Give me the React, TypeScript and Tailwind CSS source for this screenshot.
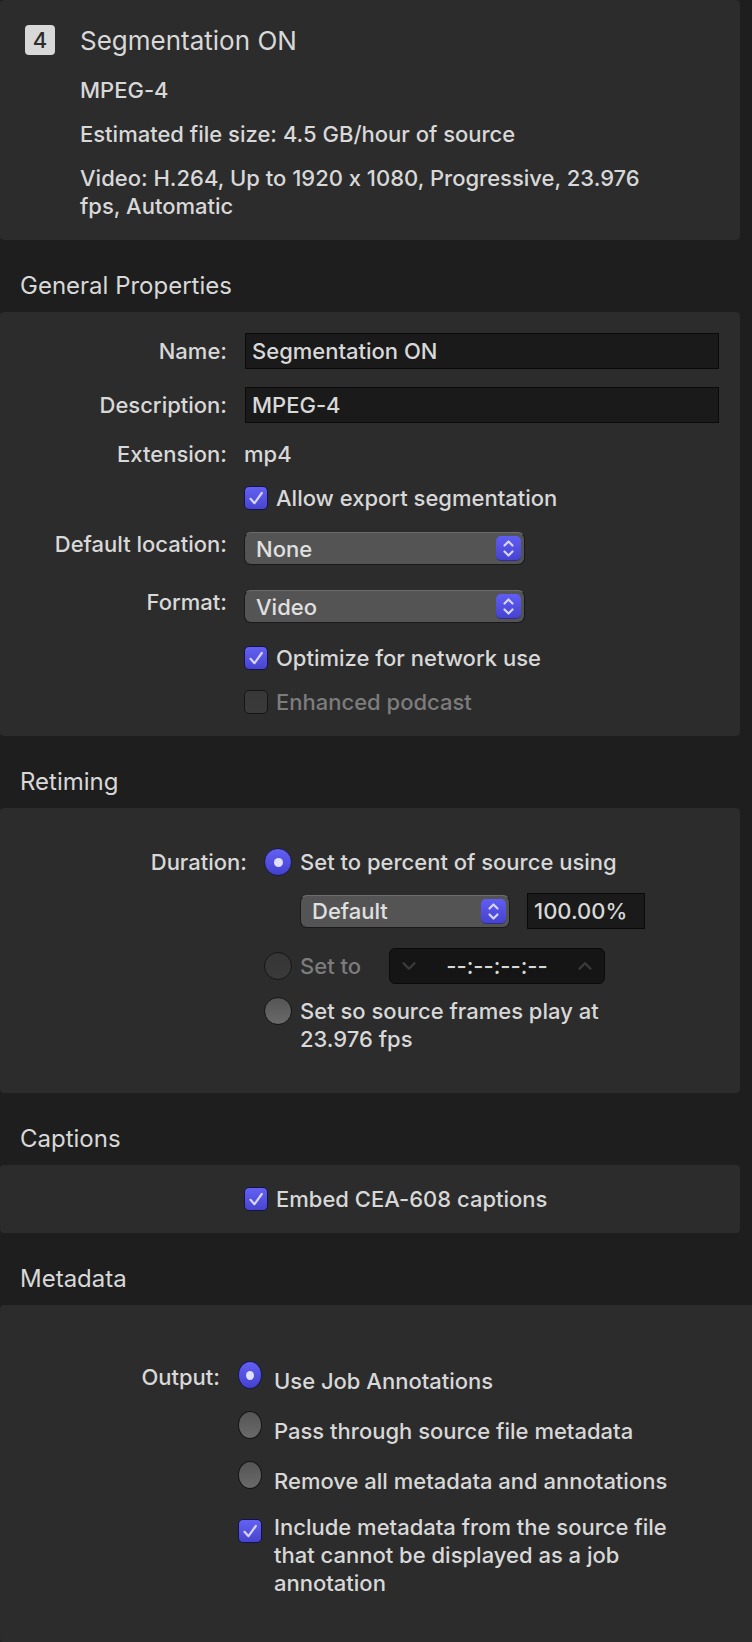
import { useState, type ReactNode } from 'react'
import { ChevronDown, ChevronUp } from 'lucide-react'

type ToggleProps = {
  id: string
  checked: boolean
  onChange: () => void
  disabled?: boolean
}

function Checkbox({ id, checked, onChange, disabled }: ToggleProps) {
  return (
    <span className="relative h-6 w-6 shrink-0">
      <input
        id={id}
        type="checkbox"
        checked={checked}
        onChange={onChange}
        disabled={disabled}
        className="block h-6 w-6 appearance-none rounded-[5px] border border-[#161616] bg-linear-to-b from-[#555555] to-[#666666] checked:border-[#14144a] checked:from-[#6461f2] checked:to-[#4745cf] disabled:from-[#383838] disabled:to-[#3a3a3a]"
      />
      {checked && (
        <svg viewBox="0 0 24 24" className="pointer-events-none absolute inset-0 h-6 w-6" fill="none" stroke="#d6d5fb" strokeWidth="2.2" strokeLinecap="round" strokeLinejoin="round">
          <path d="M6.5 12.8 L10.5 17.2 L17.8 7" />
        </svg>
      )}
    </span>
  )
}

function Radio({ id, name, checked, onChange, disabled, narrow }: ToggleProps & { name: string; narrow?: boolean }) {
  const width = narrow ? 'w-6' : 'w-7'
  return (
    <span className={`relative h-7 shrink-0 ${width}`}>
      <input
        id={id}
        name={name}
        type="radio"
        checked={checked}
        onChange={onChange}
        disabled={disabled}
        className={`block h-7 appearance-none rounded-[50%] border border-[#161616] bg-linear-to-b from-[#555555] to-[#6a6a6a] checked:border-[#1a1a50] checked:from-[#6360f3] checked:to-[#4441d0] disabled:from-[#363636] disabled:to-[#3a3a3a] ${width}`}
      />
      {checked && (
        <span className="pointer-events-none absolute inset-0 flex items-center justify-center">
          <span className={`h-[9px] rounded-[50%] bg-[#e0dffc] ${narrow ? 'w-2' : 'w-[9px]'}`} />
        </span>
      )}
    </span>
  )
}

function PopUp({ id, label, options, className }: { id: string; label?: string; options: string[]; className: string }) {
  return (
    <div className={`relative ${className}`}>
      <select
        id={id}
        aria-label={label}
        className="block h-[33px] w-full appearance-none rounded-[7px] border border-[#1a1a1a] border-t-[#6c6c6c] bg-[#545454] pl-[11px] pr-9 text-[22px] font-medium leading-[30px] text-[#e0e0e0]"
      >
        {options.map((option) => (
          <option key={option}>{option}</option>
        ))}
      </select>
      <span className="pointer-events-none absolute right-1 top-1 h-[25px] w-[25px] rounded-[5px] border-b border-[#2f2e8c] bg-linear-to-b from-[#605df4] to-[#4643cf]">
        <svg viewBox="0 0 25 25" className="h-[25px] w-[25px]" fill="none" stroke="#d6d5fb" strokeWidth="2.2" strokeLinecap="round" strokeLinejoin="round">
          <path d="M8.5 9.5 L12.5 5.5 L16.5 9.5" />
          <path d="M8.5 15.5 L12.5 19.5 L16.5 15.5" />
        </svg>
      </span>
    </div>
  )
}

function Section({ title, className, children }: { title: string; className: string; children: ReactNode }) {
  return (
    <>
      <h2 className="flex h-[72px] items-center pl-5 pt-5 text-2xl font-normal leading-8">{title}</h2>
      <section className={`bg-[#2c2c2c] ${className}`}>{children}</section>
    </>
  )
}

const fieldClass = 'block h-9 border border-[#0a0a0a] bg-[#1a1a1a] px-[6px] text-[22px] font-medium leading-7 text-[#d8d8d8]'
const labelClass = 'w-[227px] shrink-0 text-right'

export default function App() {
  const [name, setName] = useState('Segmentation ON')
  const [description, setDescription] = useState('MPEG-4')
  const [segmentation, setSegmentation] = useState(true)
  const [network, setNetwork] = useState(true)
  const [podcast, setPodcast] = useState(false)
  const [duration, setDuration] = useState('percent')
  const [percent, setPercent] = useState('100.00%')
  const [timecode, setTimecode] = useState('--:--:--:--')
  const [captions, setCaptions] = useState(true)
  const [output, setOutput] = useState('job')
  const [includeMeta, setIncludeMeta] = useState(true)

  const outputs = [
    { value: 'job', label: 'Use Job Annotations' },
    { value: 'pass', label: 'Pass through source file metadata' },
    { value: 'remove', label: 'Remove all metadata and annotations' },
  ]

  return (
    <main className="flex min-h-screen flex-col bg-[#1e1e1e] font-['Inter',sans-serif] text-[22px] font-medium leading-7 text-[#d8d8d8] [font-feature-settings:'calt'_0]">
      {/* Summary */}
      <header className="mr-3 flex rounded-[4px] bg-[#2c2c2c] pb-5 pl-[25px] pt-[25px]">
        <div className="flex h-[30px] w-[30px] shrink-0 items-center justify-center rounded-[4px] bg-[#d8d8d8] text-[#2c2c2c]">
          4
        </div>
        <div className="ml-[25px] max-w-[600px]">
          <h1 className="text-[26px] font-normal leading-8">Segmentation ON</h1>
          <div className="mt-[19px] space-y-4">
            <p>MPEG-4</p>
            <p>Estimated file size: 4.5 GB/hour of source</p>
            <p>Video: H.264, Up to 1920 x 1080, Progressive, 23.976 fps, Automatic</p>
          </div>
        </div>
      </header>

      <Section title="General Properties" className="mr-3 rounded-[4px] pb-5 pr-[21px] pt-[21px]">
        <div className="flex items-center gap-[18px]">
          <label htmlFor="name" className={labelClass}>Name:</label>
          <input id="name" value={name} onChange={(e) => setName(e.target.value)} className={`min-w-0 flex-1 ${fieldClass}`} />
        </div>
        <div className="mt-[18px] flex items-center gap-[18px]">
          <label htmlFor="description" className={labelClass}>Description:</label>
          <input id="description" value={description} onChange={(e) => setDescription(e.target.value)} className={`min-w-0 flex-1 ${fieldClass}`} />
        </div>
        <div className="mt-[17px] flex gap-[17px]">
          <span className={labelClass}>Extension:</span>
          <span>mp4</span>
        </div>
        <div className="mt-4 flex items-center gap-2 pl-[244px]">
          <Checkbox id="segmentation" checked={segmentation} onChange={() => setSegmentation(!segmentation)} />
          <label htmlFor="segmentation">Allow export segmentation</label>
        </div>
        <div className="mt-[18px] flex gap-[17px]">
          <label htmlFor="location" className={labelClass}>Default location:</label>
          <PopUp id="location" options={['None', 'Source', 'Desktop']} className="mt-[2px] w-[281px]" />
        </div>
        <div className="mt-[23px] flex gap-[17px]">
          <label htmlFor="format" className={labelClass}>Format:</label>
          <PopUp id="format" options={['Video', 'Audio']} className="mt-[2px] w-[281px]" />
        </div>
        <div className="mt-[21px] flex items-center gap-2 pl-[244px]">
          <Checkbox id="network" checked={network} onChange={() => setNetwork(!network)} />
          <label htmlFor="network">Optimize for network use</label>
        </div>
        <div className="mt-4 flex items-center gap-2 pl-[244px] text-[#7c7c7c]">
          <Checkbox id="podcast" checked={podcast} onChange={() => setPodcast(!podcast)} disabled />
          <label htmlFor="podcast">Enhanced podcast</label>
        </div>
      </Section>

      <Section title="Retiming" className="mr-3 rounded-[4px] py-10">
        <div role="radiogroup" aria-labelledby="duration-label" className="flex gap-[17px]">
          <span id="duration-label" className="w-[247px] shrink-0 text-right">Duration:</span>
          <div>
            <div className="flex gap-2">
              <Radio id="percent" name="duration" checked={duration === 'percent'} onChange={() => setDuration('percent')} />
              <label htmlFor="percent">Set to percent of source using</label>
            </div>
            <div className="mt-[17px] flex items-center gap-[17px] pl-9">
              <PopUp id="percent-mode" label="Percent of source" options={['Default', 'Custom']} className="w-[210px]" />
              <input aria-label="Percent" value={percent} onChange={(e) => setPercent(e.target.value)} className={`w-[118px] ${fieldClass}`} />
            </div>
            <div className="mt-[19px] flex items-center">
              <Radio id="set-to" name="duration" checked={duration === 'set'} onChange={() => setDuration('set')} disabled />
              <label htmlFor="set-to" className="ml-2 w-[89px] text-[#7c7c7c]">Set to</label>
              <div className="flex h-9 w-[216px] items-center justify-between rounded-[6px] border border-[#0a0a0a] bg-[#151515] px-2">
                <button type="button" aria-label="Decrease" className="text-[#3c3c3c]">
                  <ChevronDown size={22} strokeWidth={2.5} />
                </button>
                <input aria-label="Timecode" value={timecode} onChange={(e) => setTimecode(e.target.value)} className="w-[130px] bg-transparent text-center text-[22px] font-medium leading-7 text-[#d8d8d8]" />
                <button type="button" aria-label="Increase" className="text-[#3c3c3c]">
                  <ChevronUp size={22} strokeWidth={2.5} />
                </button>
              </div>
            </div>
            <div className="mt-[13px] flex gap-2">
              <Radio id="frames" name="duration" checked={duration === 'frames'} onChange={() => setDuration('frames')} />
              <label htmlFor="frames" className="w-[330px]">Set so source frames play at 23.976 fps</label>
            </div>
          </div>
        </div>
      </Section>

      <Section title="Captions" className="mr-3 rounded-[4px] py-5">
        <div className="flex items-center gap-2 pl-[244px]">
          <Checkbox id="captions" checked={captions} onChange={() => setCaptions(!captions)} />
          <label htmlFor="captions">Embed CEA-608 captions</label>
        </div>
      </Section>

      <Section title="Metadata" className="flex-1 rounded-l-[4px] pb-11 pt-14">
        <div className="flex gap-[18px]">
          <span id="output-label" className="mt-[2px] w-[220px] shrink-0 text-right">Output:</span>
          <div>
            <div role="radiogroup" aria-labelledby="output-label">
              {outputs.map((item) => (
                <div key={item.value} className="flex h-[50px] gap-3">
                  <Radio
                    id={item.value}
                    name="output"
                    checked={output === item.value}
                    onChange={() => setOutput(item.value)}
                    narrow
                  />
                  <label htmlFor={item.value} className="mt-[6px]">{item.label}</label>
                </div>
              ))}
            </div>
            <div className="mt-[2px] flex gap-3">
              <span className="mt-[6px]">
                <Checkbox id="include" checked={includeMeta} onChange={() => setIncludeMeta(!includeMeta)} />
              </span>
              <label htmlFor="include" className="w-[410px]">
                Include metadata from the source file that cannot be displayed as a job annotation
              </label>
            </div>
          </div>
        </div>
      </Section>
    </main>
  )
}
